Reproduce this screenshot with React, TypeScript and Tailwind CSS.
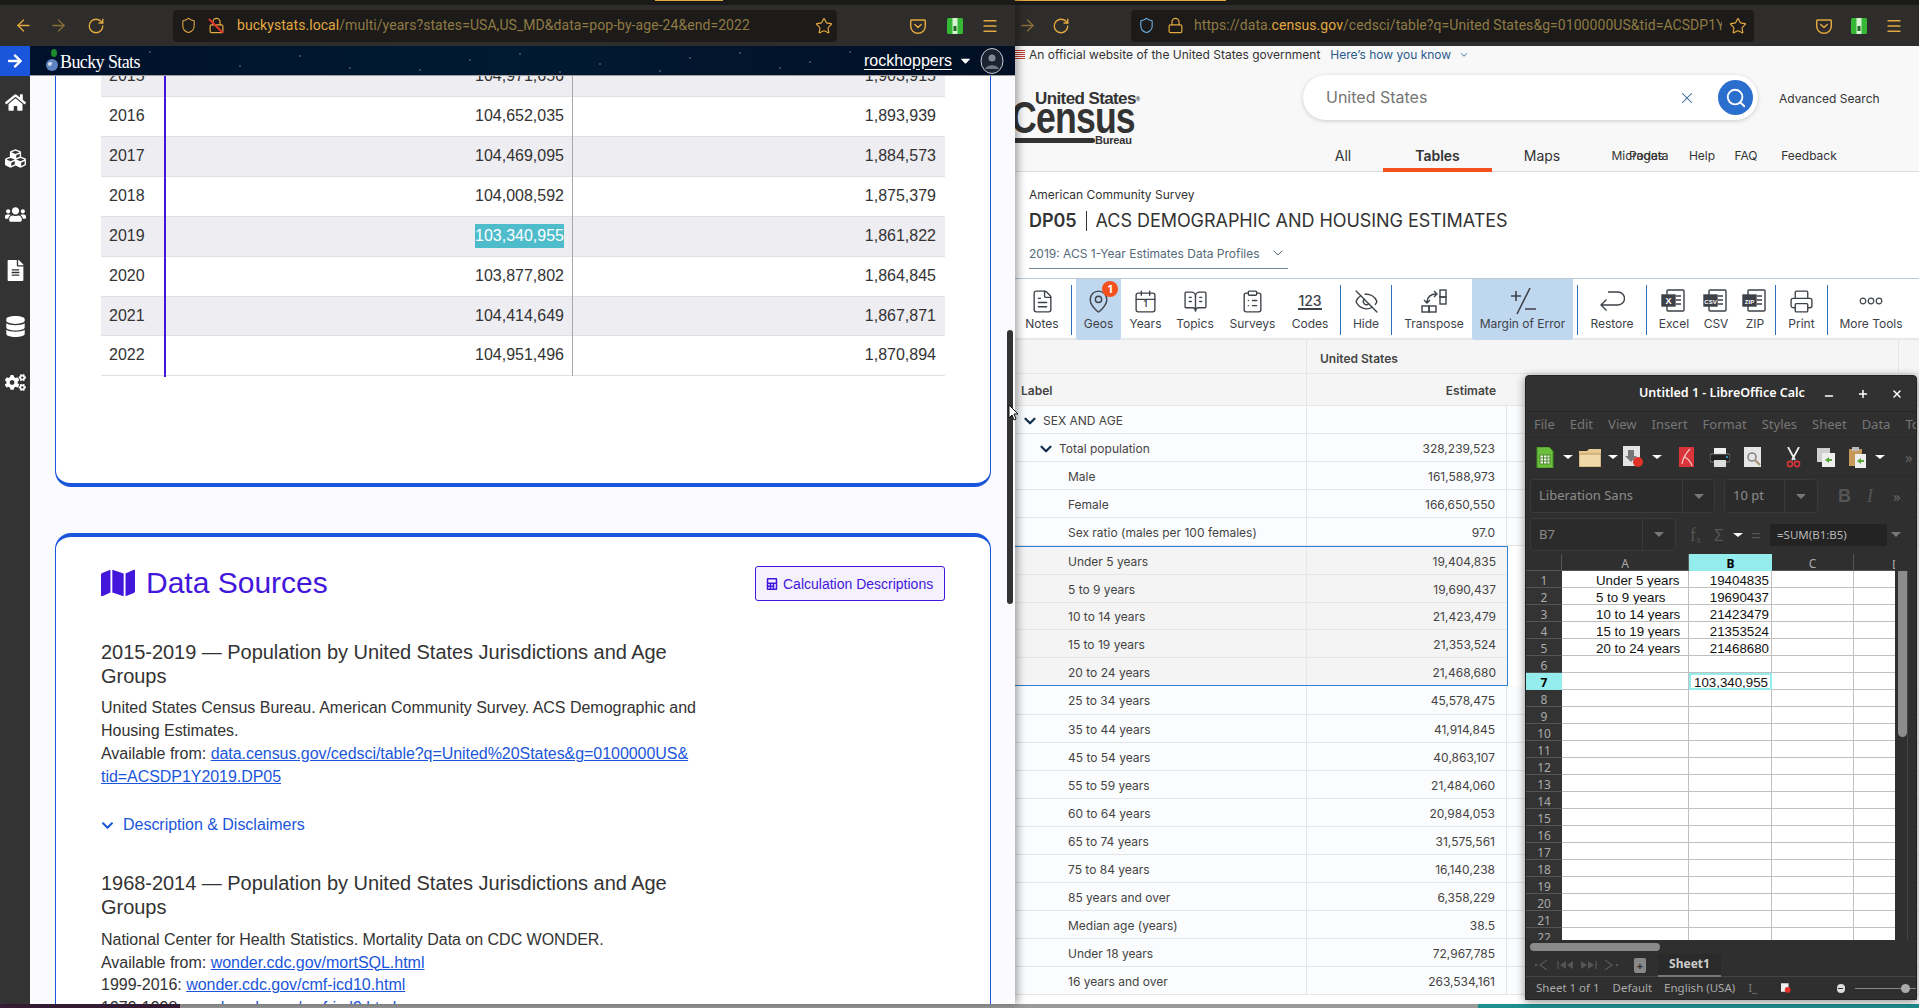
import React from "react";
import { ArrowLeft, ArrowRight, RotateCw, Shield, Lock, Star, Menu, X, Search, ChevronDown, FileText, MapPin, Calendar, BookOpenText, ClipboardList, EyeOff, Printer, Minus, Plus } from "lucide-react";
import { FaHome, FaCubes, FaUsers, FaFileAlt, FaDatabase, FaCogs, FaMap, FaCalculator, FaArrowRight, FaChevronDown, FaCaretDown } from "react-icons/fa";

const Pocket = () => (
  <svg width="18" height="18" viewBox="0 0 18 18" fill="none" stroke="#e3a83f" strokeWidth="1.5" strokeLinejoin="round" strokeLinecap="round">
    <path d="M2.5 3h13a.8.8 0 0 1 .8.8V9a7.3 7.3 0 0 1-14.6 0V3.8a.8.8 0 0 1 .8-.8z" />
    <path d="M5.8 7.5 9 10.5l3.2-3" />
  </svg>
);
const GreenExt = () => (
  <svg width="16" height="18" viewBox="0 0 16 18">
    <rect x="0" y="1" width="16" height="16" rx="1.5" fill="#35b635" />
    <rect x="5.5" y="1" width="5" height="16" fill="#d8f2d4" />
    <rect x="6.5" y="9" width="3" height="5" fill="#1d6b1d" />
  </svg>
);

function LeftToolbar() {
  return (
    <div className="flex h-[41px] items-center bg-[#2e2d2b] pl-[14px] text-[#e3a83f]">
      <ArrowLeft size={19} strokeWidth={1.6} />
      <ArrowRight size={19} strokeWidth={1.6} className="ml-[16px] text-[#8a6f38]" />
      <RotateCw size={18} strokeWidth={1.8} className="ml-[19px]" />
      <div className="ml-[68px] flex h-[32px] w-[664px] items-center rounded-[4px] bg-[#1c1b1a] pl-[7px]">
        <Shield size={17} strokeWidth={1.5} />
        <div className="relative ml-[11px]">
          <Lock size={17} strokeWidth={1.7} />
          <div className="absolute left-[7px] top-[-1px] h-[20px] w-[2px] -rotate-45 bg-[#e0322b]" />
        </div>
        <div className="ml-[12px] w-[520px] whitespace-nowrap font-['Roboto',sans-serif] text-[14px] tracking-[0.06px] text-[#8f7a44]">
          <span className="text-[#e3a83f]">buckystats.local</span>/multi/years?states=USA,US_MD&amp;data=pop-by-age-24&amp;end=2022
        </div>
        <Star size={18} strokeWidth={1.6} className="ml-[58px]" />
      </div>
      <div className="ml-[72px]"><Pocket /></div>
      <div className="ml-[20px]"><GreenExt /></div>
      <Menu size={18} strokeWidth={1.8} className="ml-[18px]" />
    </div>
  );
}

function RightToolbar() {
  return (
    <div className="flex h-[41px] items-center bg-[#2e2d2b] pl-[3px] text-[#e3a83f]">
      <ArrowRight size={19} strokeWidth={1.6} className="text-[#8a6f38]" />
      <RotateCw size={18} strokeWidth={1.8} className="ml-[15px]" />
      <div className="ml-[61px] flex h-[32px] w-[623px] items-center rounded-[4px] bg-[#1c1b1a] pl-[7px]">
        <Shield size={17} strokeWidth={1.5} className="text-[#6fb4e8]" />
        <Lock size={17} strokeWidth={1.7} className="ml-[12px]" />
        <div className="ml-[10px] w-[528px] overflow-hidden whitespace-nowrap font-['Roboto',sans-serif] text-[14px] tracking-[0.06px] text-[#8f7a44]">
          https://data.<span className="text-[#e3a83f]">census.gov</span>/cedsci/table?q=United States&amp;g=0100000US&amp;tid=ACSDP1Y2019.DP05
        </div>
        <Star size={18} strokeWidth={1.6} className="ml-[7px]" />
      </div>
      <div className="ml-[61px]"><Pocket /></div>
      <div className="ml-[18px]"><GreenExt /></div>
      <Menu size={18} strokeWidth={1.8} className="ml-[18px]" />
    </div>
  );
}

const stars = [[150,6],[240,20],[300,10],[420,24],[520,8],[600,18],[690,12],[780,22],[850,6],[930,14],[990,20],[350,22],[470,14],[660,25],[560,26],[110,10],[740,7],[810,16]];

function Sidebar() {
  const items = [FaHome, FaCubes, FaUsers, FaFileAlt, FaDatabase, FaCogs];
  return (
    <div className="flex w-[30px] shrink-0 flex-col items-center bg-[#333333] text-white">
      {items.map((I, i) => (
        <div key={i} className={`flex h-[56px] w-full shrink-0 items-center justify-center ${i === 0 ? "-mt-[2px]" : ""}`}><I size={21} /></div>
      ))}
    </div>
  );
}

const rows: [string, string, string, number][] = [
  ["2015", "104,971,656", "1,903,915", 40],
  ["2016", "104,652,035", "1,893,939", 40],
  ["2017", "104,469,095", "1,884,573", 40],
  ["2018", "104,008,592", "1,875,379", 40],
  ["2019", "103,340,955", "1,861,822", 40],
  ["2020", "103,877,802", "1,864,845", 40],
  ["2021", "104,414,649", "1,867,871", 39],
  ["2022", "104,951,496", "1,870,894", 40],
];

function LeftPage() {
  return (
    <div className="relative flex min-h-0 flex-1 overflow-hidden bg-[#fbfbfe] font-['Liberation_Sans',Arial,sans-serif] text-[16px] text-[#333]">
      <Sidebar />
      <div className="min-w-0 flex-1 overflow-hidden pl-[25px]">
        <div className="-mt-[20px] h-[431px] w-[936px] rounded-b-[16px] border-x border-b-4 border-x-[#1a56db] border-b-[#1a56db] bg-white pl-[45px] pt-[1px]">
          <div className="w-[844px]">
            {rows.map(([y, a, b, h], i) => (
              <div key={y} className={`flex pb-[2px] shadow-[inset_0_-1px_0_#e0e0e6] ${i % 2 === 0 ? "bg-[#eeedf2]" : "bg-white"} ${h === 39 ? "h-[39px]" : "h-[40px]"}`}>
                <div className="flex w-[63px] items-center pl-[8px]">{y}</div>
                <div className="relative flex w-[409px] items-center justify-end pr-[9px]">
                  <div className="absolute left-0 top-0 h-[41px] w-[2px] bg-[#4316db]" />
                  <div className="absolute right-0 top-0 h-[40px] w-px bg-[#a8a8a8]" />
                  {y === "2019" ? <span className="bg-[#4fbccc] text-white">{a}</span> : a}
                </div>
                <div className="flex flex-1 items-center justify-end pr-[9px]">{b}</div>
              </div>
            ))}
          </div>
        </div>
        <div className="mt-[46px] h-[600px] w-[936px] rounded-t-[16px] border-x border-t-4 border-x-[#1a56db] border-t-[#1a56db] bg-white pl-[45px] pr-[45px] pt-[29px]">
          <div className="flex h-[35px] items-center justify-between">
            <div className="-mt-[2px] flex items-center text-[#4316db]">
              <FaMap size={34} />
              <span className="ml-[11px] text-[30px]">Data Sources</span>
            </div>
            <div className="flex h-[35px] w-[190px] items-center rounded-[3px] border border-[#4316db] bg-[#f4f1fd] pl-[10px] pt-[1px] text-[14px] text-[#4316db]">
              <FaCalculator size={12} />
              <span className="ml-[5px]">Calculation Descriptions</span>
            </div>
          </div>
          <div className="mt-[39px] w-[600px] tracking-[-0.02px]">
            <div className="text-[20px] leading-[24px] tracking-[-0.04px]">2015-2019 — Population by United States Jurisdictions and Age Groups</div>
            <div className="mt-[8px] leading-[23px]">
              United States Census Bureau. American Community Survey. ACS Demographic and Housing Estimates.
              <br />Available from: <a className="tracking-[-0.05px] text-[#1a56db] underline">data.census.gov/cedsci/table?q=United%20States&amp;g=0100000US&amp;<wbr />tid=ACSDP1Y2019.DP05</a>
            </div>
            <div className="mt-[25px] flex h-[24px] items-center text-[#1a56db]">
              <FaChevronDown size={13} />
              <span className="ml-[9px]">Description &amp; Disclaimers</span>
            </div>
            <div className="mt-[34px] text-[20px] leading-[24px] tracking-[-0.04px]">1968-2014 — Population by United States Jurisdictions and Age Groups</div>
            <div className="mt-[10px] leading-[22.5px]">
              National Center for Health Statistics. Mortality Data on CDC WONDER.
              <br />Available from: <a className="text-[#1a56db] underline">wonder.cdc.gov/mortSQL.html</a>
              <br />1999-2016: <a className="text-[#1a56db] underline">wonder.cdc.gov/cmf-icd10.html</a>
              <br />1979-1998: <a className="text-[#1a56db] underline">wonder.cdc.gov/cmf-icd9.html</a>
            </div>
          </div>
        </div>
      </div>
      <div className="absolute right-[2px] top-[254px] h-[274px] w-[6px] rounded-full bg-[#333]" />
    </div>
  );
}

function LeftHeader() {
  return (
    <div className="relative flex h-[30px] items-center border-b border-[#a0a0a0] bg-gradient-to-r from-[#00102a] via-[#001a33] to-[#020f24] font-['Liberation_Serif',serif] text-white">
      <svg className="absolute inset-0" width="1015" height="29">
        {stars.map(([x, y], i) => <circle key={i} cx={x} cy={y} r="0.7" fill="#8ea3b8" />)}
      </svg>
      <div className="relative flex h-[30px] w-[30px] items-center justify-center bg-[#1a56db]"><FaArrowRight size={16} /></div>
      <svg className="relative ml-[15px]" width="15" height="24" viewBox="0 0 15 24">
        <ellipse cx="9" cy="4" rx="3" ry="4" fill="#1d8a2c" />
        <circle cx="7" cy="16" r="6" fill="#5f83c2" />
        <path d="M3 14c2-2 5-1 4 1s-3 3-4 1z" fill="#cfd8e6" />
      </svg>
      <span className="relative pt-[3px] text-[18px] tracking-[-0.6px]">Bucky Stats</span>
      <div className="relative ml-auto flex items-center pr-[11px]">
        <span className="font-['Liberation_Sans',sans-serif] text-[16px] underline underline-offset-[3px]">rockhoppers</span>
        <FaCaretDown size={15} className="ml-[6px]" />
        <svg className="ml-[7px]" width="24" height="26" viewBox="0 0 24 26">
          <ellipse cx="12" cy="13" rx="11" ry="12.5" fill="#1b2230" stroke="#c7ccd4" strokeWidth="1" />
          <circle cx="12" cy="10" r="3.5" fill="#7e8a98" />
          <path d="M5 21c2-5 12-5 14 0z" fill="#6c7783" />
        </svg>
      </div>
    </div>
  );
}

const census: [string, string, number][] = [
  ["Under 5 years", "19,404,835", 1],
  ["5 to 9 years", "19,690,437", 1],
  ["10 to 14 years", "21,423,479", 1],
  ["15 to 19 years", "21,353,524", 1],
  ["20 to 24 years", "21,468,680", 1],
  ["25 to 34 years", "45,578,475", 0],
  ["35 to 44 years", "41,914,845", 0],
  ["45 to 54 years", "40,863,107", 0],
  ["55 to 59 years", "21,484,060", 0],
  ["60 to 64 years", "20,984,053", 0],
  ["65 to 74 years", "31,575,561", 0],
  ["75 to 84 years", "16,140,238", 0],
  ["85 years and over", "6,358,229", 0],
  ["Median age (years)", "38.5", 0],
  ["Under 18 years", "72,967,785", 0],
  ["16 years and over", "263,534,161", 0],
];

function CensusRow({ label, value, indent, chev }: { label: string; value: string; indent: string; chev?: string }) {
  return (
    <div className="flex h-[28.1px] shrink-0 border-b border-[#e4e6e8] bg-[#fbfcfd]">
      <div className={`flex w-[292px] items-center border-r border-[#e4e6e8] pt-[3px] ${indent}`}>
        {chev && <ChevronDown size={18} strokeWidth={3} className={`${chev} text-[#11304f]`} />}
        <span>{label}</span>
      </div>
      <div className="flex w-[200px] items-center justify-end border-r border-[#e4e6e8] pr-[11px] pt-[3px]">{value}</div>
      <div className="flex-1" />
    </div>
  );
}

const Sep = ({ cls }: { cls: string }) => <div className={`mt-[6px] h-[50px] w-px shrink-0 bg-[#2f6fb7] ${cls}`} />;

function Tool({ w, label, active, children }: { w: string; label: string; active?: boolean; children: React.ReactNode }) {
  return (
    <div className={`relative flex h-[61px] shrink-0 flex-col items-center rounded-b-[3px] pt-[8px] ${w} ${active ? "bg-[#c0d7f0]" : ""}`}>
      <div className="flex h-[28px] items-center justify-center">{children}</div>
      <div className="whitespace-nowrap text-[12px] leading-[18px] text-[#3d4248]">{label}</div>
    </div>
  );
}

const DocIcon = ({ tag }: { tag: string }) => (
  <svg width="26" height="24" viewBox="0 0 26 24" fill="none" stroke="#3d4248" strokeWidth="1.4">
    <rect x="6" y="1" width="17" height="21" rx="1" />
    <path d="M15 7h5M15 11h5M15 15h5" />
    <rect x="1" y="6" width="13" height="11" fill="#3d4248" />
    <text x="7.5" y="14.5" textAnchor="middle" fill="#fff" stroke="none" fontSize={tag.length > 1 ? 6 : 9} fontWeight="700" fontFamily="Liberation Sans, sans-serif">{tag}</text>
  </svg>
);

function CensusToolbar() {
  const ic = { size: 25, strokeWidth: 1.3, color: "#3d4248" };
  return (
    <div className="flex h-[62px] shrink-0 border-y border-b-2 border-t-[#bccbd6] border-b-[#e6e9ec] bg-white pl-px">
      <Tool w="w-[52px]" label="Notes"><FileText {...ic} /></Tool>
      <Sep cls="ml-[3px] mr-[4px]" />
      <Tool w="w-[45px]" label="Geos" active>
        <MapPin {...ic} />
        <div className="absolute left-[26px] top-[2px] flex h-[16px] w-[16px] items-center justify-center rounded-full bg-[#f4511e] text-[11px] font-bold leading-none text-white">1</div>
      </Tool>
      <Tool w="w-[49px]" label="Years">
        <div className="relative"><Calendar {...ic} /><span className="absolute inset-x-0 top-[9px] text-center text-[9px] font-semibold leading-[12px] text-[#3d4248]">1</span></div>
      </Tool>
      <Tool w="w-[50px]" label="Topics"><BookOpenText {...ic} /></Tool>
      <Tool w="w-[65px]" label="Surveys"><ClipboardList {...ic} /></Tool>
      <Tool w="w-[50px]" label="Codes">
        <span className="border-b-2 border-[#3d4248] text-[14px] font-medium leading-[15px] text-[#3d4248]">123</span>
      </Tool>
      <Sep cls="ml-[5px]" />
      <Tool w="w-[50px]" label="Hide"><EyeOff {...ic} /></Tool>
      <Sep cls="mr-[4px]" />
      <Tool w="w-[76px]" label="Transpose">
        <svg width="26" height="26" viewBox="0 0 26 26" fill="none" stroke="#3d4248" strokeWidth="1.4">
          <rect x="1" y="18" width="7" height="6" /><rect x="8" y="18" width="7" height="6" />
          <rect x="19" y="2" width="6" height="7" /><rect x="19" y="9" width="6" height="7" />
          <path d="M6 14c0-5 4-8 9-8M13 3l3 3-3 3M3 12l3 3 3-3" />
        </svg>
      </Tool>
      <Tool w="w-[101px]" label="Margin of Error" active>
        <svg width="26" height="28" viewBox="0 0 26 28" fill="none" stroke="#3d4248" strokeWidth="1.6">
          <path d="M1 9h10M6 4v10M20 1 7 27M15 22h11" />
        </svg>
      </Tool>
      <Sep cls="ml-[4px]" />
      <Tool w="w-[68px]" label="Restore">
        <svg width="26" height="22" viewBox="0 0 26 22" fill="none" stroke="#3d4248" strokeWidth="1.4" strokeLinejoin="round">
          <path d="M9 2h10a6.5 6.5 0 0 1 0 13H2M7.5 9.5 2 15l5.5 5.5" />
        </svg>
      </Tool>
      <Sep cls="" />
      <Tool w="w-[54px]" label="Excel"><DocIcon tag="X" /></Tool>
      <Tool w="w-[30px]" label="CSV"><DocIcon tag="CSV" /></Tool>
      <Tool w="w-[40px] ml-[4px]" label="ZIP"><DocIcon tag="ZIP" /></Tool>
      <Sep cls="" />
      <Tool w="w-[51px]" label="Print"><Printer {...ic} /></Tool>
      <Sep cls="" />
      <Tool w="w-[86px]" label="More Tools">
        <svg width="24" height="8" viewBox="0 0 24 8" fill="none" stroke="#3d4248" strokeWidth="1.2">
          <circle cx="4" cy="4" r="2.8" /><circle cx="12" cy="4" r="2.8" /><circle cx="20" cy="4" r="2.8" />
        </svg>
      </Tool>
    </div>
  );
}

function RightPage() {
  return (
    <div className="flex min-h-0 flex-1 flex-col overflow-hidden bg-white font-['Inter',sans-serif] text-[12px] text-[#444]">
      <div className="flex h-[18px] shrink-0 items-center bg-[#f8f8f8] text-[12px] text-[#333]">
        <div className="mr-[4px] h-[10px] w-[10px] bg-[repeating-linear-gradient(180deg,#c0392b_0,#c0392b_1px,#fff_1px,#fff_2px)]" />
        <span>An official website of the United States government</span>
        <span className="ml-[10px] border-b border-[#2a5a8c] text-[#2a5a8c]">Here’s how you know</span>
        <ChevronDown size={10} strokeWidth={2} className="ml-[8px] text-[#2a5a8c]" />
      </div>
      <div className="flex h-[108px] shrink-0 border-b border-[#ddd] bg-[#f8f8f8]">
        <div className="relative w-[288px] shrink-0 overflow-hidden pt-[27px] text-[#333]">
          <div className="ml-[20px] whitespace-nowrap font-['Liberation_Sans',sans-serif] text-[17px] font-bold leading-[15px] tracking-[-0.6px]">United States<sup className="text-[6px]">®</sup></div>
          <div className="-ml-[4px] -mt-[6px] origin-left scale-x-[0.81] whitespace-nowrap font-['Liberation_Sans',sans-serif] text-[44px] font-bold leading-[36px] tracking-[-1px]">Census</div>
          <div className="-mt-[1px] flex items-center">
            <div className="h-[5px] w-[80px] rounded-r-full bg-[#333]" />
            <span className="font-['Liberation_Sans',sans-serif] text-[11px] font-bold leading-[10px] tracking-[-0.2px]">Bureau</span>
          </div>
        </div>
        <div className="flex-1">
          <div className="mt-[11px] flex items-center">
            <div className="flex h-[45px] w-[455px] items-center rounded-full bg-white pl-[23px] text-[16px] text-[#757575] shadow-[0_1px_4px_rgba(0,0,0,0.18)]">
              <span className="w-[103px] whitespace-nowrap pb-[2px]">United States</span>
              <X size={18} strokeWidth={1.4} className="ml-[249px] text-[#2f5f9a]" />
              <div className="ml-[22px] flex h-[35px] w-[35px] items-center justify-center rounded-full bg-[#2b6fce]"><Search size={22} strokeWidth={2} color="#fff" /></div>
            </div>
            <span className="ml-[21px] pt-[2px] text-[12px] text-[#333]">Advanced Search</span>
          </div>
          <div className="mt-[20px] flex h-[32px] items-start text-[#333]">
            <div className="flex h-[30px] w-[80px] items-center justify-center text-[14px]">All</div>
            <div className="flex h-[32px] w-[109px] items-center justify-center border-b-4 border-[#f4511e] pt-[2px] text-[14px] font-semibold">Tables</div>
            <div className="flex h-[30px] w-[100px] items-center justify-center text-[14px]">Maps</div>
            <div className="relative flex h-[32px] w-[96px] items-center justify-center">Microdata<span className="absolute right-[24px]">Pages</span></div>
            <div className="flex h-[32px] w-[28px] items-center justify-center">Help</div>
            <div className="ml-[14px] flex h-[32px] w-[32px] items-center justify-center">FAQ</div>
            <div className="ml-[14px] flex h-[32px] w-[66px] items-center justify-center">Feedback</div>
          </div>
        </div>
      </div>
      <div className="h-[106px] shrink-0 pl-[14px] pt-[15px]">
        <div className="leading-[16px] text-[#333]">American Community Survey</div>
        <div className="mt-[6px] flex h-[24px] items-center text-[18px] leading-[24px] tracking-[-0.05px] text-[#333]">
          <b className="font-semibold">DP05</b>
          <span className="mx-[9px] h-[20px] w-px bg-[#333]" />
          <span>ACS DEMOGRAPHIC AND HOUSING ESTIMATES</span>
        </div>
        <div className="mt-[12px] flex h-[24px] w-[259px] items-start border-b border-[#6f8696] text-[#54697a]">
          <span>2019: ACS 1-Year Estimates Data Profiles</span>
          <ChevronDown size={16} strokeWidth={1.5} className="ml-[10px]" />
        </div>
      </div>
      <CensusToolbar />
      <div className="flex h-[34px] shrink-0 border-b border-[#e4e6e8] bg-[#f5f5f5] font-semibold">
        <div className="w-[292px] border-r border-[#e4e6e8]" />
        <div className="flex w-[592px] items-center border-r border-[#e4e6e8] pl-[13px] pt-[4px]">United States</div>
      </div>
      <div className="flex h-[32px] shrink-0 border-b border-[#e4e6e8] bg-[#f5f5f5] font-semibold">
        <div className="flex w-[292px] items-center border-r border-[#e4e6e8] pl-[6px] pt-[3px]">Label</div>
        <div className="flex w-[200px] items-center justify-end pr-[11px] pt-[3px]">Estimate</div>
      </div>
      <CensusRow label="SEX AND AGE" value="" indent="pl-[6px]" chev="mr-[4px]" />
      <CensusRow label="Total population" value="328,239,523" indent="pl-[22px]" chev="mr-[4px]" />
      <CensusRow label="Male" value="161,588,973" indent="pl-[53px]" />
      <CensusRow label="Female" value="166,650,550" indent="pl-[53px]" />
      <CensusRow label="Sex ratio (males per 100 females)" value="97.0" indent="pl-[53px]" />
      <div className="w-[493px] shrink-0 border-y border-r border-[#2f80d8]">
        {census.slice(0, 5).map(([l, v]) => (
          <div key={l} className="flex h-[27.6px] border-b border-[#e4e6e8] bg-[#f4f4f4] last:border-b-0">
            <div className="flex w-[292px] items-center border-r border-[#e4e6e8] pl-[53px] pt-[3px]">{l}</div>
            <div className="flex w-[200px] items-center justify-end pr-[11px] pt-[3px]">{v}</div>
          </div>
        ))}
      </div>
      {census.slice(5).map(([l, v]) => <CensusRow key={l} label={l} value={v} indent="pl-[53px]" />)}
    </div>
  );
}

const DCaret = ({ c = "ml-[8px]" }: { c?: string }) => <div className={`h-0 w-0 border-x-[5px] border-t-[4px] border-x-transparent border-t-white ${c}`} />;
const GCaret = () => <div className="h-0 w-0 border-x-[5px] border-t-[5px] border-x-transparent border-t-[#777]" />;

function CalcToolbar() {
  return (
    <div className="flex h-[39px] items-center border-b border-[#2b2b2b] pl-[10px]">
      <svg width="18" height="21" viewBox="0 0 18 21"><path d="M1 0h12l4 4v17H1z" fill="#6cbf3c" stroke="#3e8f1e" /><rect x="4" y="8" width="10" height="9" fill="#f2f2f2" stroke="#4c8b2b" /><path d="M4 11h10M4 14h10M7.5 8v9M11 8v9" stroke="#4c8b2b" /></svg>
      <DCaret c="ml-[9px]" />
      <svg className="ml-[6px]" width="22" height="19" viewBox="0 0 22 19"><path d="M0 3h8l2-2h12v18H0z" fill="#e6c890" /><path d="M0 6h22v13H0z" fill="#f0d8a8" stroke="#b89a62" /></svg>
      <DCaret c="ml-[7px]" />
      <svg className="ml-[5px]" width="21" height="22" viewBox="0 0 21 22"><rect x="0" y="0" width="17" height="20" fill="#e4e4e4" /><path d="M5 4h6v6h3l-6 6-6-6h3z" fill="#777" /><circle cx="15" cy="16" r="5" fill="#e0322b" /></svg>
      <DCaret c="ml-[8px]" />
      <svg className="ml-[17px]" width="15" height="20" viewBox="0 0 15 20"><rect width="15" height="20" fill="#d9343a" /><path d="M11 2C7 6 4 11 3 17M6 10c3 2 6 5 7 9" stroke="#f6c6c6" strokeWidth="1.2" fill="none" /></svg>
      <svg className="ml-[16px]" width="20" height="19" viewBox="0 0 20 19"><rect x="4" y="0" width="12" height="6" fill="#eee" /><rect x="0" y="6" width="20" height="8" rx="1.5" fill="#222" stroke="#bbb" strokeWidth=".6" /><rect x="4" y="12" width="12" height="7" fill="#ddd" /><circle cx="17" cy="9" r="1" fill="#3bb4e8" /></svg>
      <svg className="ml-[14px]" width="18" height="21" viewBox="0 0 18 21"><rect width="17" height="20" fill="#e6e6e6" /><circle cx="8" cy="10" r="4" fill="none" stroke="#888" strokeWidth="1.6" /><path d="M11 13l5 5" stroke="#a58f6a" strokeWidth="2" /></svg>
      <svg className="ml-[24px]" width="15" height="21" viewBox="0 0 15 21" fill="none"><path d="M2 0l7 13M13 0 6 13" stroke="#eee" strokeWidth="1.8" /><circle cx="4" cy="17" r="2.6" stroke="#d9343a" strokeWidth="1.6" /><circle cx="11" cy="17" r="2.6" stroke="#d9343a" strokeWidth="1.6" /></svg>
      <svg className="ml-[16px]" width="18" height="19" viewBox="0 0 18 19"><rect width="13" height="14" fill="#cfcfcf" /><rect x="5" y="5" width="13" height="14" fill="#eee" /><path d="M8 12l4-3v2h3v2h-3v2z" fill="#5aa63a" /></svg>
      <svg className="ml-[14px]" width="17" height="21" viewBox="0 0 17 21"><rect y="2" width="13" height="17" fill="#c6995a" /><rect x="3" y="0" width="7" height="4" fill="#bbb" /><rect x="6" y="7" width="11" height="14" fill="#eee" /><path d="M8 14l4-3v2h3v2h-3v2z" fill="#5aa63a" /></svg>
      <DCaret c="ml-[9px]" />
      <span className="ml-[20px] text-[15px] text-[#666]">»</span>
    </div>
  );
}

const SheetNav = () => (
  <svg width="88" height="14" viewBox="0 0 88 14" fill="none" stroke="#555" strokeWidth="1.3">
    <path d="M13 2 6 7l7 5" /><circle cx="2" cy="7" r="1.2" fill="#555" stroke="none" />
    <path d="M24 3v8" /><path d="M32 3l-6 4 6 4zM39 3l-6 4 6 4z" fill="#555" stroke="none" />
    <path d="M47 3l6 4-6 4zM54 3l6 4-6 4z" fill="#555" stroke="none" /><path d="M62 3v8" />
    <path d="M71 2l7 5-7 5" /><circle cx="83" cy="7" r="1.2" fill="#555" stroke="none" />
  </svg>
);

function CalcWindow() {
  const headers = Array.from({ length: 22 }, (_, i) => i + 1);
  const col: Record<number, [string, string]> = {
    1: ["Under 5 years", "19404835"],
    2: ["5 to 9 years", "19690437"],
    3: ["10 to 14 years", "21423479"],
    4: ["15 to 19 years", "21353524"],
    5: ["20 to 24 years", "21468680"],
  };
  return (
    <div className="absolute left-[510px] top-[375px] flex h-[625px] w-[392px] flex-col overflow-hidden rounded-t-[4px] border border-[#222] bg-[#2f2f2f] font-['Noto_Sans',sans-serif] text-[#777] shadow-[0_2px_10px_rgba(0,0,0,0.45)]">
      <div className="flex h-[36px] shrink-0 items-center border-b border-[#262626] bg-[#313131] text-white">
        <span className="ml-[113px] w-[164px] whitespace-nowrap text-[12.5px] font-semibold">Untitled 1 - LibreOffice Calc</span>
        <Minus size={12} strokeWidth={3} className="ml-[20px] mt-[4px]" />
        <Plus size={12} strokeWidth={3} className="ml-[22px]" />
        <X size={12} strokeWidth={3} className="ml-[22px]" />
      </div>
      <div className="flex h-[26px] shrink-0 items-center gap-[15px] overflow-hidden whitespace-nowrap border-b border-[#2b2b2b] pl-[8px] text-[13px]">
        <span>File</span><span>Edit</span><span>View</span><span>Insert</span><span>Format</span><span>Styles</span><span>Sheet</span><span>Data</span><span>Tools</span>
      </div>
      <CalcToolbar />
      <div className="mt-[2px] flex h-[34px] shrink-0 items-center pl-[4px] text-[#8c8c8c]">
        <div className="flex h-[34px] w-[185px] items-center rounded-[4px] border border-[#3a3a3a] bg-[#2b2b2b] pl-[8px] text-[13px]">
          <span className="w-[143px]">Liberation Sans</span>
          <div className="flex h-[32px] flex-1 items-center justify-center border-l border-[#3a3a3a]"><GCaret /></div>
        </div>
        <div className="ml-[9px] flex h-[34px] w-[94px] items-center rounded-[4px] border border-[#3a3a3a] bg-[#2b2b2b] pl-[8px] text-[13px]">
          <span className="w-[51px]">10 pt</span>
          <div className="flex h-[32px] flex-1 items-center justify-center border-l border-[#3a3a3a]"><GCaret /></div>
        </div>
        <span className="ml-[20px] font-['Liberation_Sans',sans-serif] text-[18px] font-bold text-[#555]">B</span>
        <span className="ml-[16px] font-['Liberation_Serif',serif] text-[18px] italic text-[#555]">I</span>
        <span className="ml-[20px] text-[15px] text-[#666]">»</span>
      </div>
      <div className="mt-[5px] flex h-[33px] shrink-0 items-center pl-[4px] text-[#8c8c8c]">
        <div className="flex h-[33px] w-[146px] items-center rounded-[4px] border border-[#3a3a3a] bg-[#2b2b2b] pl-[8px] text-[13px]">
          <span className="w-[103px]">B7</span>
          <div className="flex h-[31px] flex-1 items-center justify-center border-l border-[#3a3a3a]"><GCaret /></div>
        </div>
        <span className="ml-[14px] w-[16px] font-['Liberation_Serif',serif] text-[18px] leading-none text-[#555]">f<sub className="text-[10px]">x</sub></span>
        <span className="ml-[8px] w-[13px] text-[17px] leading-none text-[#555]">Σ</span>
        <DCaret c="ml-[6px]" />
        <span className="ml-[8px] w-[14px] text-[18px] leading-none text-[#555]">=</span>
        <div className="ml-[5px] flex h-[22px] w-[117px] items-center bg-[#232323] pl-[7px] text-[11.5px] text-[#b8b8b8]">=SUM(B1:B5)</div>
        <div className="ml-[4px]"><GCaret /></div>
      </div>
      <div className="mt-[3px] flex min-h-0 flex-1 flex-col">
        <div className="flex h-[17px] shrink-0 text-[12px] leading-[17px] text-[#aaa]">
          <div className="w-[36px] border-b border-r border-[#555]" />
          <div className="flex w-[127px] items-center justify-center border-b border-r border-[#555] pt-[2px]">A</div>
          <div className="flex w-[83px] items-center justify-center bg-[#95ecec] pt-[2px] font-bold text-black">B</div>
          <div className="flex w-[82px] items-center justify-center border-b border-r border-[#555] pt-[2px]">C</div>
          <div className="w-[41px] overflow-hidden border-b border-[#555] pl-[38px] pt-[2px]">D</div>
        </div>
        <div className="flex h-[369px] shrink-0 overflow-hidden">
          <div className="w-[369px] shrink-0 overflow-hidden">
            {headers.map(n => (
              <div key={n} className="flex h-[17px] shrink-0 font-['Liberation_Sans',sans-serif] text-[13.3px] leading-[18px] text-[#111]">
                <div className={`flex w-[36px] shrink-0 items-center justify-center border-b pt-[3px] font-['Noto_Sans',sans-serif] text-[12px] ${n === 7 ? "border-[#95ecec] bg-[#95ecec] font-bold text-black" : "border-[#555] bg-[#333] text-[#aaa]"}`}>{n}</div>
                <div className="w-[127px] shrink-0 overflow-hidden border-b border-r border-[#c0c0c0] bg-white pl-[34px] pt-px">{col[n]?.[0]}</div>
                <div className={`w-[83px] shrink-0 overflow-hidden bg-white pr-[2px] text-right ${n === 7 ? "border-2 border-[#95ecec] leading-[15px]" : "border-b border-r border-[#c0c0c0] pt-px"}`}>{n === 7 ? "103,340,955" : col[n]?.[1]}</div>
                <div className="w-[82px] shrink-0 border-b border-r border-[#c0c0c0] bg-white" />
                <div className="flex-1 border-b border-[#c0c0c0] bg-white" />
              </div>
            ))}
          </div>
          <div className="relative mr-[8px] flex-1 border-r border-[#444]">
            <div className="ml-[3px] mt-[-7px] h-[173px] w-[9px] rounded-full bg-[#8c8c8c]" />
          </div>
        </div>
        <div className="flex h-[14px] shrink-0 items-center pl-[4px]">
          <div className="h-[8px] w-[130px] rounded-full bg-[#8a8a8a]" />
        </div>
        <div className="flex h-[23px] shrink-0 items-center border-b border-[#444] pl-[8px] text-[#555]">
          <SheetNav />
          <div className="ml-[12px] flex h-[15px] w-[12px] items-center justify-center rounded-[2px] bg-[#888] text-[11px] font-bold leading-none text-[#333]">+</div>
          <div className="ml-[12px] flex h-[23px] w-[63px] items-center justify-center border-b-2 border-[#777] bg-[#2a2a2a] text-[12px] font-bold text-[#ccc]">Sheet1</div>
        </div>
        <div className="flex h-[21px] shrink-0 items-center whitespace-nowrap pl-[10px] pt-px text-[11.5px] text-[#aaa]">
          <span>Sheet 1 of 1</span>
          <span className="ml-[13px]">Default</span>
          <span className="ml-[12px]">English (USA)</span>
          <span className="ml-[13px] text-[#777]">I_</span>
          <svg className="ml-[24px]" width="10" height="10" viewBox="0 0 10 10"><rect width="8" height="9" fill="#eee" /><circle cx="7" cy="7" r="3" fill="#e0322b" /></svg>
          <div className="ml-[46px] flex h-[9px] w-[9px] items-center justify-center rounded-full bg-[#ddd]"><div className="h-px w-[5px] bg-[#333]" /></div>
          <div className="relative ml-[10px] h-px w-[64px] bg-[#888]"><div className="absolute left-[46px] top-[-4px] h-[9px] w-[9px] rounded-full bg-[#aaa]" /></div>
        </div>
      </div>
    </div>
  );
}

export default function App() {
  return (
    <div className="relative flex h-[1008px] w-[1919px] flex-col overflow-hidden bg-[#8f8f8f]">
      <div className="flex h-[1004px] shrink-0">
        <div className="relative z-10 flex w-[1015px] shrink-0 flex-col overflow-hidden shadow-[3px_0_8px_rgba(0,0,0,0.35)]">
          <div className="relative h-[5px] shrink-0 bg-[#1a1a18]"><div className="absolute left-[655px] top-0 h-px w-[68px] bg-[#e3a83f]" /></div>
          <LeftToolbar />
          <LeftHeader />
          <LeftPage />
        </div>
        <div className="relative flex min-w-0 flex-1 flex-col">
          <div className="relative h-[5px] shrink-0 bg-[#1a1a18]"><div className="absolute left-0 top-0 h-px w-[211px] bg-[#e3a83f]" /></div>
          <RightToolbar />
          <RightPage />
          <CalcWindow />
        </div>
      </div>
      <div className="flex h-[4px] shrink-0">
        <div className="w-[180px] bg-[#3a1f3a]" />
        <div className="w-[1298px] bg-[#9a9a9a]" />
        <div className="flex-1 bg-[#1f8f8f]" />
      </div>
      <svg className="absolute left-[1008px] top-[404px] z-20" width="12" height="18" viewBox="0 0 12 18">
        <path d="M1 1v13l3-3 2 5 2-1-2-5h4z" fill="#fff" stroke="#111" strokeWidth="1" />
      </svg>
    </div>
  );
}
